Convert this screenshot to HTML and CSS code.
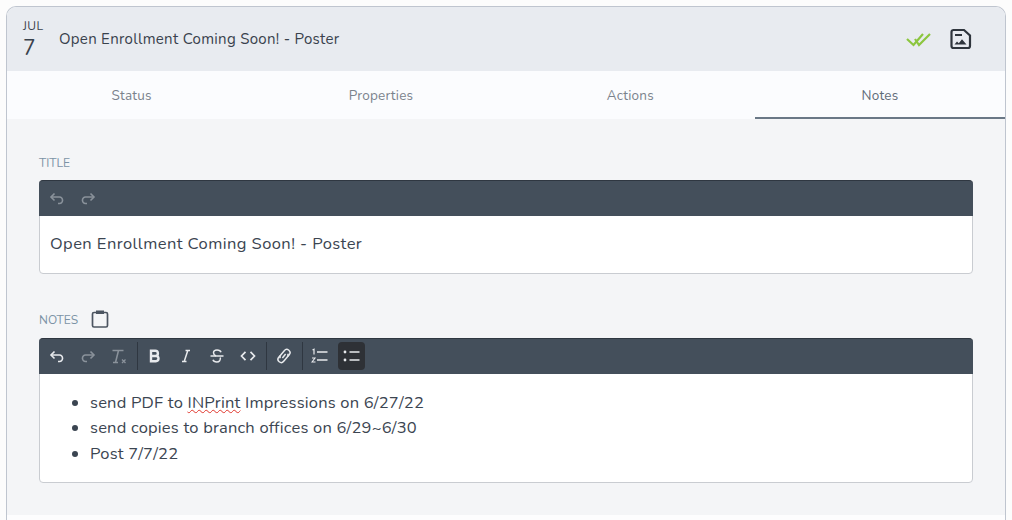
FILE: index.html
```html
<!DOCTYPE html>
<html lang="en">
<head>
  <meta charset="UTF-8">
  <meta name="viewport" content="width=device-width, initial-scale=1.0">
  <title>Open Enrollment Coming Soon! - Poster</title>
  <link rel="stylesheet" href="styles.css">
</head>
<body>
  <div class="card">
    <header class="card-head">
      <div class="date">
        <span class="month">JUL</span>
        <span class="day">7</span>
      </div>
      <div class="card-title">Open Enrollment Coming Soon! - Poster</div>
      <svg class="icon-check" width="26" height="15" viewBox="0 0 26 15" fill="none" stroke="#8cc63f" stroke-width="2.200">
        <path d="M1 7l6.500 6L17 2"/>
        <path d="M9 7l4 6L24 2"/>
      </svg>
      <svg class="icon-save" width="22" height="22" viewBox="0 0 22 22" fill="none" stroke="#2f353d" stroke-width="2.200">
        <path d="M3.500 2h10.500l6 5.500V18a2 2 0 0 1-2 2H3.500a2 2 0 0 1-2-2V4a2 2 0 0 1 2-2z"/>
        <path d="M5 7h7" stroke-width="1.800"/>
        <path d="M4.500 16.500l2.500-3 1.800 1.700 3.200-4 4.500 5.300z" fill="#2f353d" stroke="none"/>
      </svg>
    </header>

    <nav class="tabs">
      <div class="tab">Status</div>
      <div class="tab">Properties</div>
      <div class="tab">Actions</div>
      <div class="tab active">Notes</div>
    </nav>

    <div class="card-body">
      <div class="field">
        <div class="field-label">TITLE</div>
        <div class="editor">
          <div class="toolbar">
            <button class="tool off">
              <svg width="16" height="16" viewBox="0 0 16 16" fill="none" stroke="currentColor" stroke-width="1.600"><path d="M5.500 3.500L2 7l3.500 3.500"/><path d="M2 7h8.500a3 3 0 0 1 3 3.200 3 3 0 0 1-3 3.300H9"/></svg>
            </button>
            <button class="tool off">
              <svg width="16" height="16" viewBox="0 0 16 16" fill="none" stroke="currentColor" stroke-width="1.600"><path d="M10.500 3.500L14 7l-3.500 3.500"/><path d="M14 7H5.500a3 3 0 0 0-3 3.200 3 3 0 0 0 3 3.300H7"/></svg>
            </button>
          </div>
          <div class="editor-text title-text">Open Enrollment Coming Soon! - Poster</div>
        </div>
      </div>

      <div class="field">
        <div class="field-label notes-label">NOTES
          <svg class="icon-clip" width="18" height="20" viewBox="0 0 18 20" fill="none" stroke="#4c5561" stroke-width="1.700">
            <path d="M5 3.500H3a1.500 1.500 0 0 0-1.500 1.500v11.500A1.500 1.500 0 0 0 3 18h12a1.500 1.500 0 0 0 1.500-1.500V5A1.500 1.500 0 0 0 15 3.500h-2"/>
            <rect x="5" y="1.500" width="8" height="3.500" fill="#4c5561" stroke="none"/>
          </svg>
        </div>
        <div class="editor">
          <div class="toolbar">
            <button class="tool">
              <svg width="16" height="16" viewBox="0 0 16 16" fill="none" stroke="currentColor" stroke-width="1.600"><path d="M5.500 3.500L2 7l3.500 3.500"/><path d="M2 7h8.500a3 3 0 0 1 3 3.200 3 3 0 0 1-3 3.300H9"/></svg>
            </button>
            <button class="tool off">
              <svg width="16" height="16" viewBox="0 0 16 16" fill="none" stroke="currentColor" stroke-width="1.600"><path d="M10.500 3.500L14 7l-3.500 3.500"/><path d="M14 7H5.500a3 3 0 0 0-3 3.200 3 3 0 0 0 3 3.300H7"/></svg>
            </button>
            <button class="tool off">
              <svg width="16" height="16" viewBox="0 0 16 16" fill="none" stroke="currentColor" stroke-width="1.500"><path d="M1.500 2.500h11"/><path d="M7.500 2.500L4.500 14.500"/><path d="M2 14.500h5"/><path d="M11 11.500l3.500 3.500M14.500 11.500L11 15" stroke-width="1.300"/></svg>
            </button>
            <span class="sep"></span>
            <button class="tool">
              <svg width="16" height="16" viewBox="0 0 16 16" fill="none" stroke="currentColor" stroke-width="2.400"><path d="M4 2.800h4.300a2.500 2.500 0 0 1 0 5.200H4zM4 8h4.900a2.600 2.600 0 0 1 0 5.200H4zM4 1.600v12.800"/></svg>
            </button>
            <button class="tool">
              <svg width="16" height="16" viewBox="0 0 16 16" fill="none" stroke="currentColor" stroke-width="1.500"><path d="M7.500 2.500H12M4 13.500h4.500M9.800 2.500L6.200 13.500"/></svg>
            </button>
            <button class="tool">
              <svg width="16" height="16" viewBox="0 0 16 16" fill="none" stroke="currentColor" stroke-width="1.500"><path d="M1.500 8h13"/><path d="M12 4.200C11.600 2.800 10 2 8 2 5.800 2 4.500 3.200 4.500 4.800c0 1.500 1 2.500 2.500 3.200"/><path d="M11.300 9.500c.5 2.500-1 4.500-3.500 4.500-2 0-3.400-.8-3.800-2.200"/></svg>
            </button>
            <button class="tool">
              <svg width="16" height="16" viewBox="0 0 16 16" fill="none" stroke="currentColor" stroke-width="1.700"><path d="M5.500 3.800L1.500 8l4 4.200M10.500 3.800l4 4.200-4 4.200"/></svg>
            </button>
            <span class="sep"></span>
            <button class="tool">
              <svg width="16" height="16" viewBox="0 0 16 16" fill="none" stroke="currentColor" stroke-width="1.500"><g transform="rotate(-50 8 8)"><path d="M6 4.800H3.700a3.200 3.200 0 0 0 0 6.400h5.600a3.200 3.200 0 0 0 2.800-1.700"/><path d="M10 11.200h2.300a3.200 3.200 0 0 0 0-6.400H6.700a3.200 3.200 0 0 0-2.800 1.700"/><path d="M5.500 8h5"/></g></svg>
            </button>
            <span class="sep"></span>
            <button class="tool">
              <svg width="18" height="16" viewBox="0 0 18 16" fill="none" stroke="currentColor"><path d="M6 4h10.500M6 12h10.500" stroke-width="1.500"/><path d="M1.500 2l1.500-.8V6.500" stroke-width="1.200"/><path d="M1 10h3l-3 4h3.500" stroke-width="1.100"/></svg>
            </button>
            <button class="tool active">
              <svg width="18" height="16" viewBox="0 0 18 16" fill="none" stroke="currentColor"><path d="M6.500 4h10M6.500 12h10" stroke-width="1.500"/><circle cx="2" cy="4" r="1.400" fill="currentColor" stroke="none"/><circle cx="2" cy="12" r="1.400" fill="currentColor" stroke="none"/></svg>
            </button>
          </div>
          <div class="editor-text">
            <ul>
              <li>send PDF to <span class="misspelled">INPrint</span> Impressions on 6/27/22</li>
              <li>send copies to branch offices on 6/29~6/30</li>
              <li>Post 7/7/22</li>
            </ul>
          </div>
        </div>
      </div>
    </div>
  </div>
</body>
</html>
```

FILE: styles.css
```css
html, body {
  margin: 0;
  padding: 0;
  height: 100%;
  overflow: hidden;
  background-color: #fcfcfc;
}

body {
  font-family: "Nunito", "Lato", "Noto Sans", sans-serif;
  color: #3f4a56;
}

.card {
  margin: 6px 6px 0 6px;
  border: 1px solid #bfc5cf;
  border-bottom: none;
  border-radius: 10px 10px 0 0;
  background-color: #fdfdfe;
  height: 513px;
  width: 998px;
  overflow: hidden;
}

.card-head {
  display: flex;
  align-items: center;
  height: 64px;
  background-color: #e8ebf0;
  padding: 0 33px 0 16px;
}

.date {
  display: flex;
  flex-direction: column;
  width: 36px;
  padding-top: 2px;
}

.month {
  font-size: 12px;
  line-height: 16px;
  letter-spacing: 0.400px;
  color: #3a424c;
}

.day {
  font-size: 21px;
  line-height: 28px;
  color: #3a424c;
}

.card-title {
  flex: 1;
  font-size: 15px;
  letter-spacing: 0.300px;
  color: #39424d;
}

.icon-check {
  margin-right: 18px;
}

.tabs {
  display: flex;
  height: 48px;
  background-color: #fbfcfe;
}

.tab {
  flex: 1;
  display: flex;
  align-items: center;
  justify-content: center;
  font-size: 13.500px;
  letter-spacing: 0.200px;
  color: #7a828c;
  box-sizing: border-box;
}

.tab.active {
  flex: 0 0 250px;
  padding-top: 2px;
  color: #5f6b78;
  border-bottom: 2px solid #6a7886;
}

.card-body {
  height: 396px;
  box-sizing: border-box;
  padding: 34px 32px 0 32px;
  background-color: #f4f5f7;
}

.field {
  margin-bottom: 35px;
}

.field-label {
  display: flex;
  align-items: center;
  gap: 13px;
  height: 18px;
  margin-bottom: 9px;
  padding-top: 2px;
  box-sizing: border-box;
  font-size: 12px;
  color: #7c93a6;
}

.notes-label {
  height: 20px;
}

.icon-clip {
  margin-top: -2px;
}

.editor {
  border: 1px solid #c9ccd1;
  border-radius: 4px;
  background-color: #fff;
}

.toolbar {
  display: flex;
  align-items: center;
  gap: 5px;
  height: 36px;
  margin: -1px -1px 0 -1px;
  padding: 0 5px 1px 5px;
  background-color: #444f5b;
  border-top: 1px solid #2f3741;
  border-radius: 4px 4px 0 0;
  box-sizing: border-box;
}

.tool {
  display: flex;
  align-items: center;
  justify-content: center;
  width: 26px;
  height: 28px;
  padding: 0;
  border: none;
  border-radius: 4px;
  background: none;
  color: #e8eaed;
}

.tool.off {
  color: #8a929b;
}

.tool.active {
  width: 27px;
  background-color: #2e3136;
}

.sep {
  width: 1px;
  height: 28px;
  margin: 0 -0.500px;
  background-color: #2f3741;
}

.editor-text {
  padding: 12px 10px;
  font-size: 16.500px;
  line-height: 32px;
  letter-spacing: 0.200px;
  color: #3b4551;
}

.title-text {
  height: 33px;
  letter-spacing: 0.430px;
}

.editor-text ul {
  margin: 0;
  padding: 3.500px 0 3.500px 40px;
  line-height: 25.500px;
}

.misspelled {
  text-decoration: underline wavy #e0352b 1px;
}
```
